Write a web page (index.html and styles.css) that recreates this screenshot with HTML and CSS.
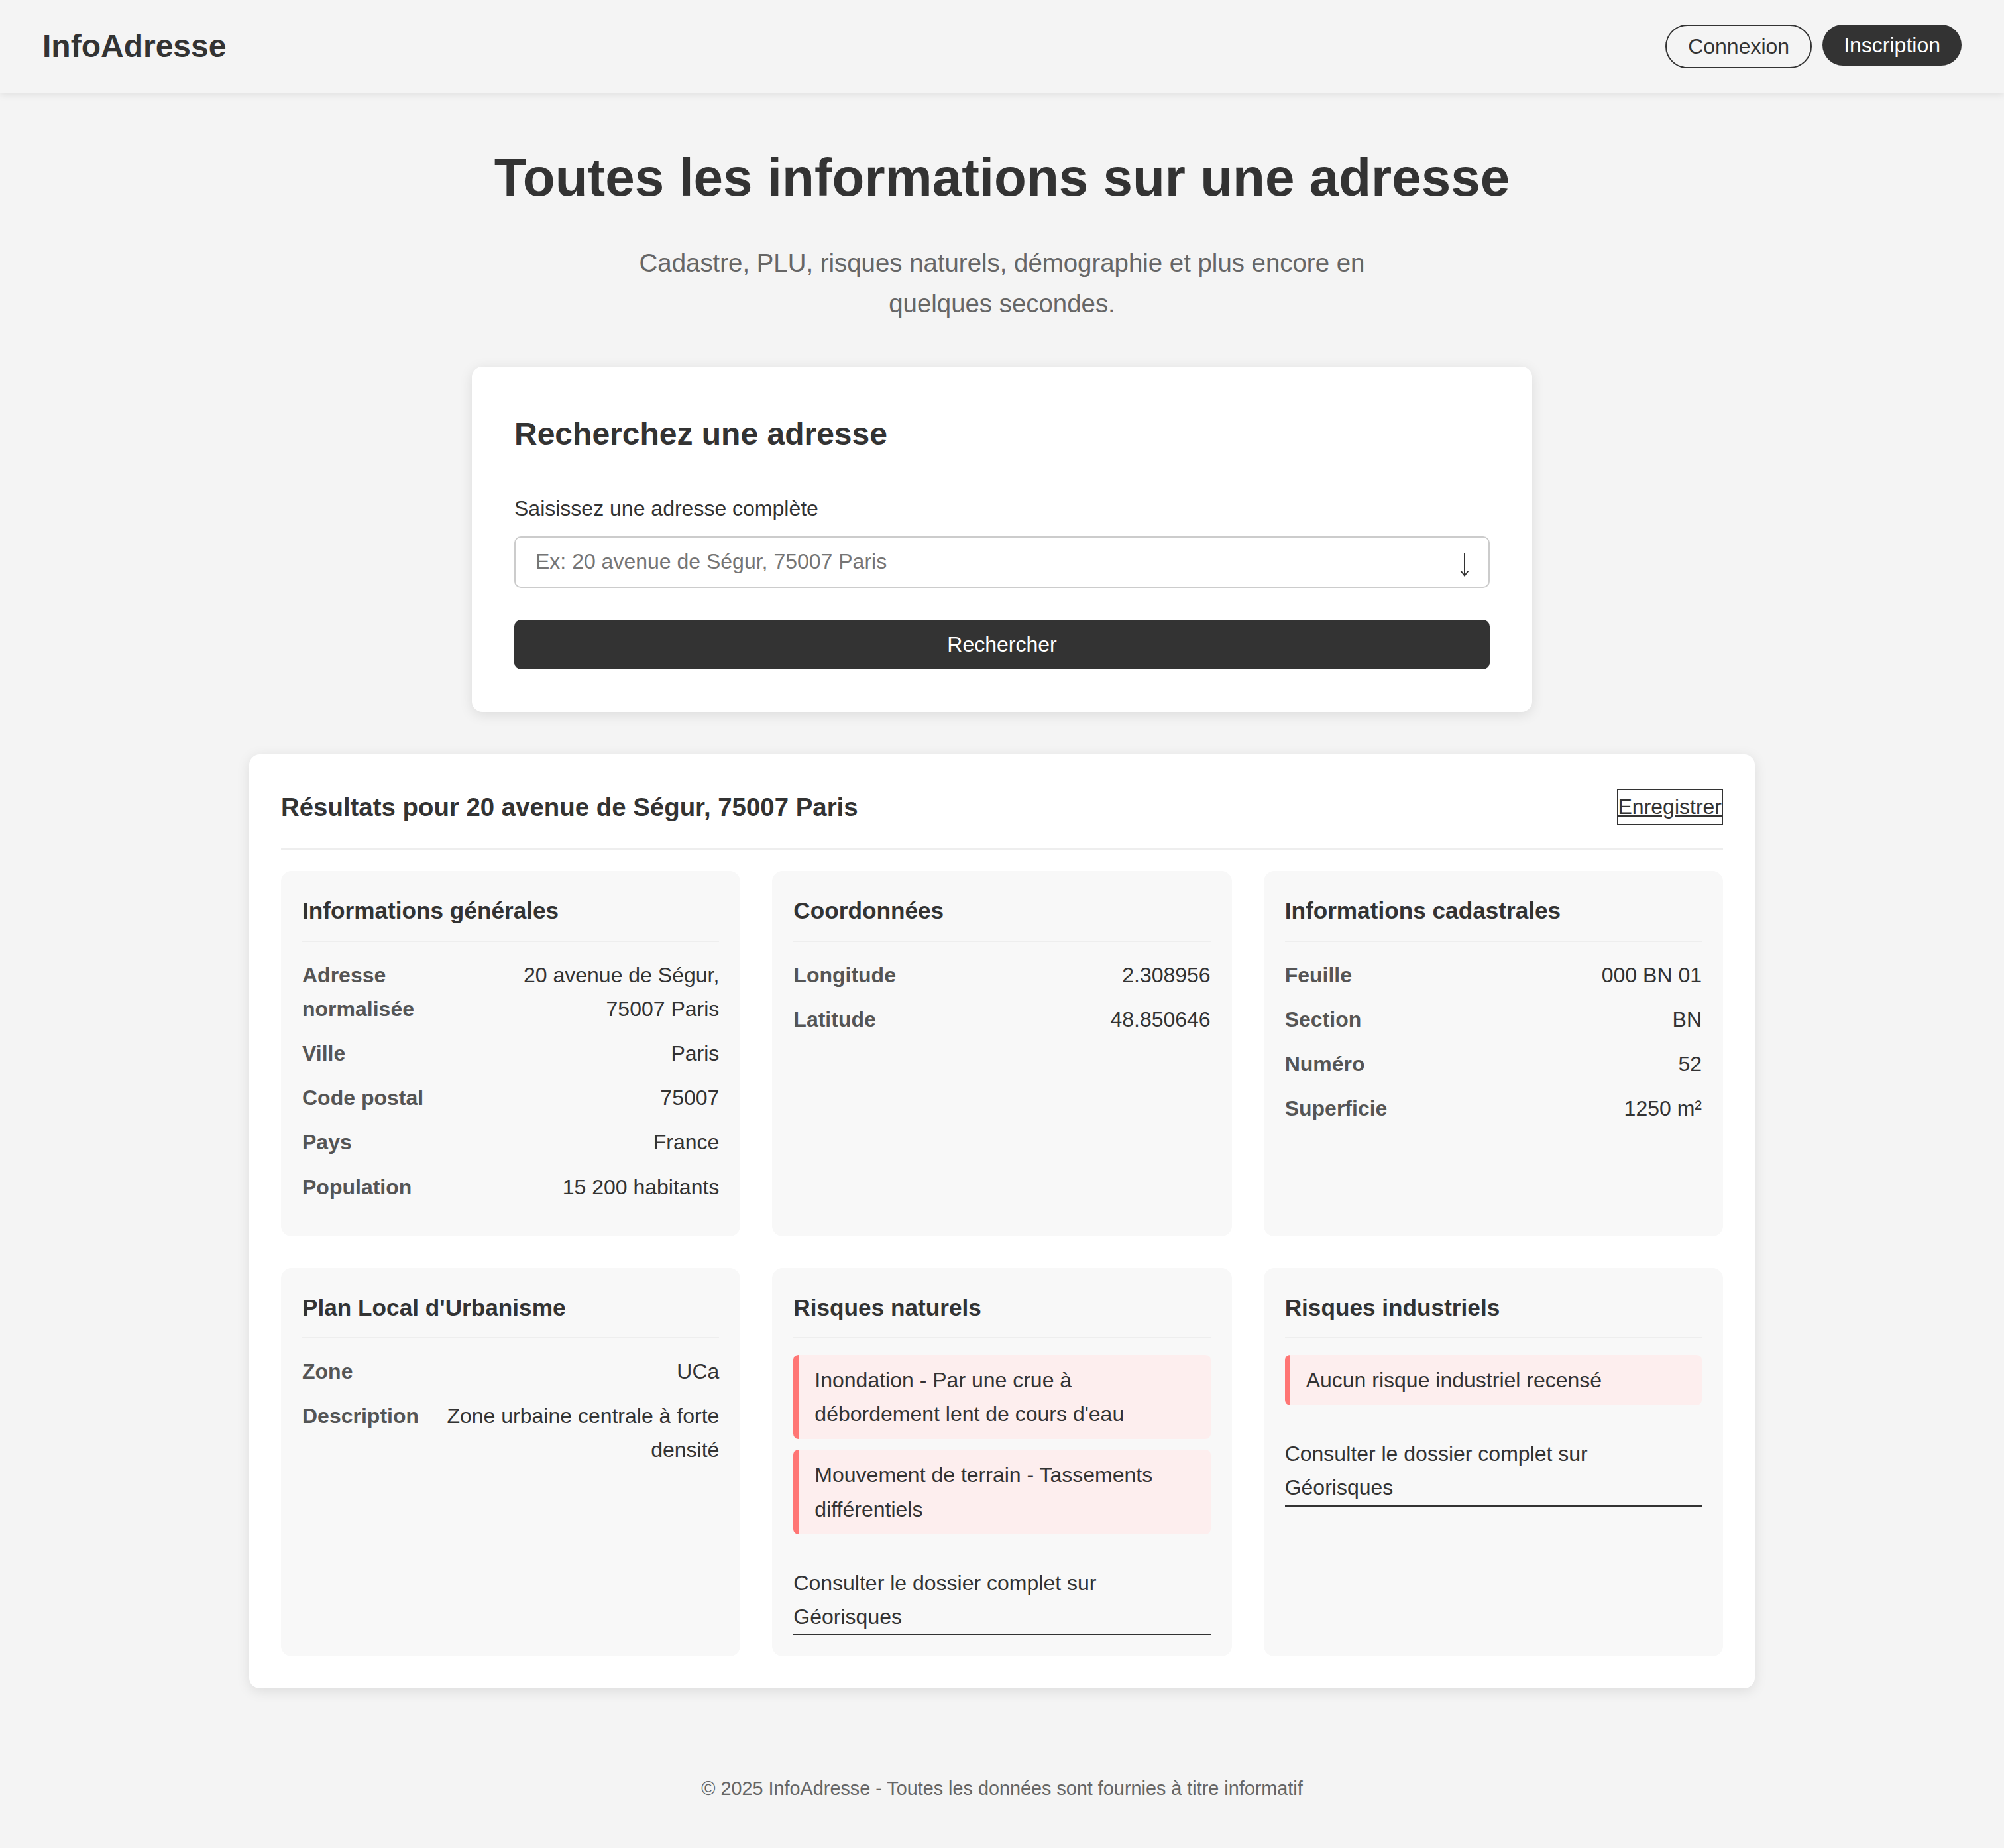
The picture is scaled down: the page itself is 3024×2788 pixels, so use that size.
FILE: index.html
```html
<!DOCTYPE html>
<html lang="fr">
<head>
<meta charset="utf-8">
<title>InfoAdresse</title>
<link rel="stylesheet" href="styles.css">
</head>
<body>
<header class="site-header">
  <div class="logo">InfoAdresse</div>
  <nav class="nav">
    <button class="btn-outline">Connexion</button>
    <button class="btn-dark">Inscription</button>
  </nav>
</header>

<main class="main">
  <section class="hero">
    <h1 class="hero-title">Toutes les informations sur une adresse</h1>
    <p class="hero-sub">Cadastre, PLU, risques naturels, démographie et plus encore en quelques secondes.</p>
  </section>

  <section class="search-card">
    <h2 class="search-title">Recherchez une adresse</h2>
    <label class="search-label" for="addr">Saisissez une adresse complète</label>
    <div class="search-input">
      <input id="addr" class="search-field" type="text" placeholder="Ex: 20 avenue de Ségur, 75007 Paris">
      <svg class="search-arrow" width="14" height="36" viewBox="0 0 14 36"><path d="M7 1 V34 M1.5 27.5 L7 34.5 L12.5 27.5" fill="none" stroke="#333" stroke-width="2"/></svg>
    </div>
    <button class="search-btn">Rechercher</button>
  </section>

  <section class="results">
    <div class="results-head">
      <h2 class="results-title">Résultats pour 20 avenue de Ségur, 75007 Paris</h2>
      <button class="save-btn">Enregistrer</button>
    </div>

    <div class="grid">
      <div class="info-card">
        <h3 class="info-title">Informations générales</h3>
        <div class="row"><span class="lbl">Adresse normalisée</span><span class="val">20 avenue de Ségur, 75007 Paris</span></div>
        <div class="row"><span class="lbl">Ville</span><span class="val">Paris</span></div>
        <div class="row"><span class="lbl">Code postal</span><span class="val">75007</span></div>
        <div class="row"><span class="lbl">Pays</span><span class="val">France</span></div>
        <div class="row"><span class="lbl">Population</span><span class="val">15 200 habitants</span></div>
      </div>

      <div class="info-card">
        <h3 class="info-title">Coordonnées</h3>
        <div class="row"><span class="lbl">Longitude</span><span class="val">2.308956</span></div>
        <div class="row"><span class="lbl">Latitude</span><span class="val">48.850646</span></div>
      </div>

      <div class="info-card">
        <h3 class="info-title">Informations cadastrales</h3>
        <div class="row"><span class="lbl">Feuille</span><span class="val">000 BN 01</span></div>
        <div class="row"><span class="lbl">Section</span><span class="val">BN</span></div>
        <div class="row"><span class="lbl">Numéro</span><span class="val">52</span></div>
        <div class="row"><span class="lbl">Superficie</span><span class="val">1250 m²</span></div>
      </div>

      <div class="info-card">
        <h3 class="info-title">Plan Local d'Urbanisme</h3>
        <div class="row"><span class="lbl">Zone</span><span class="val">UCa</span></div>
        <div class="row"><span class="lbl">Description</span><span class="val">Zone urbaine centrale à forte densité</span></div>
      </div>

      <div class="info-card">
        <h3 class="info-title">Risques naturels</h3>
        <div class="alert">Inondation - Par une crue à débordement lent de cours d'eau</div>
        <div class="alert">Mouvement de terrain - Tassements différentiels</div>
        <a class="geo-link" href="#">Consulter le dossier complet sur Géorisques</a>
      </div>

      <div class="info-card">
        <h3 class="info-title">Risques industriels</h3>
        <div class="alert">Aucun risque industriel recensé</div>
        <a class="geo-link" href="#">Consulter le dossier complet sur Géorisques</a>
      </div>
    </div>
  </section>
</main>

<footer class="site-footer">© 2025 InfoAdresse - Toutes les données sont fournies à titre informatif</footer>
</body>
</html>
```

FILE: styles.css
```css
* { box-sizing: border-box; }

html, body {
  margin: 0;
  padding: 0;
}

body {
  background: #f4f4f4;
  color: #333;
  font-family: "Liberation Sans", Arial, Helvetica, sans-serif;
  font-size: 32px;
  line-height: 1.6;
}

/* Header */
.site-header {
  height: 140px;
  padding: 0 64px;
  display: flex;
  align-items: center;
  justify-content: space-between;
  background: #f4f4f4;
  box-shadow: 0 4px 10px rgba(0, 0, 0, 0.08);
  position: relative;
  z-index: 1;
}

.logo {
  font-size: 48px;
  font-weight: bold;
  color: #333;
  line-height: 1.2;
}

.nav {
  display: flex;
  align-items: flex-start;
  gap: 16px;
}

.btn-outline,
.btn-dark {
  font-family: inherit;
  font-size: 32px;
  line-height: 38px;
  padding: 12px 32px;
  border-radius: 999px;
  cursor: pointer;
}

.btn-outline {
  background: transparent;
  color: #333;
  border: 2px solid #333;
}

.btn-dark {
  background: #333;
  color: #fff;
  border: none;
}

/* Main */
.main {
  max-width: 2400px;
  margin: 0 auto;
  padding: 64px 64px;
}

.hero {
  text-align: center;
}

.hero-title {
  margin: 0 0 34px;
  font-size: 80px;
  line-height: 1.6;
  font-weight: bold;
  color: #333;
}

.hero-sub {
  max-width: 1200px;
  margin: 0 auto 64px;
  font-size: 38.4px;
  line-height: 1.6;
  color: #666;
}

/* Search card */
.search-card {
  max-width: 1600px;
  margin: 0 auto 64px;
  background: #fff;
  border-radius: 16px;
  padding: 64px;
  box-shadow: 0 4px 20px rgba(0, 0, 0, 0.1);
}

.search-title {
  margin: 0 0 48px;
  font-size: 48px;
  line-height: 1.6;
  font-weight: bold;
}

.search-label {
  display: block;
  margin-bottom: 16px;
  font-size: 32px;
  color: #333;
}

.search-input {
  display: flex;
  align-items: center;
  height: 78px;
  border: 2px solid #ccc;
  border-radius: 10px;
  background: #fff;
  padding: 0 29px 0 30px;
  margin-bottom: 48px;
}

.search-field {
  flex: 1;
  min-width: 0;
  border: none;
  outline: none;
  background: transparent;
  padding: 0;
  font-family: inherit;
  font-size: 32px;
  color: #333;
}

.search-field::placeholder {
  color: #757575;
}

.search-arrow {
  flex: none;
  margin-top: 8px;
}

.search-btn {
  display: block;
  width: 100%;
  height: 75px;
  border: none;
  border-radius: 10px;
  background: #333;
  color: #fff;
  font-family: inherit;
  font-size: 32px;
  cursor: pointer;
}

/* Results */
.results {
  background: #fff;
  border-radius: 16px;
  padding: 49px 48px 48px;
  box-shadow: 0 4px 20px rgba(0, 0, 0, 0.1);
}

.results-head {
  display: flex;
  align-items: center;
  justify-content: space-between;
  padding-bottom: 32px;
  border-bottom: 2px solid #eee;
  margin-bottom: 32px;
}

.results-title {
  margin: 0;
  font-size: 38.4px;
  line-height: 1.6;
  font-weight: bold;
}

.save-btn {
  background: transparent;
  border: 2px solid #333;
  padding: 0;
  font-family: inherit;
  font-size: 32px;
  line-height: 1.6;
  color: #333;
  text-decoration: underline;
  cursor: pointer;
}

.grid {
  display: grid;
  grid-template-columns: repeat(3, 1fr);
  gap: 48px;
}

.info-card {
  background: #f8f8f8;
  border-radius: 16px;
  padding: 32px;
}

.info-title {
  margin: 0 0 25px;
  padding-bottom: 16px;
  border-bottom: 2px solid #eee;
  font-size: 35.2px;
  line-height: 1.6;
  font-weight: bold;
  color: #333;
}

.row {
  display: flex;
  justify-content: space-between;
  gap: 16px;
  margin-bottom: 16px;
}

.lbl {
  font-weight: bold;
  color: #555;
}

.val {
  text-align: right;
  color: #333;
}

.alert {
  background: #fdeeee;
  border-left: 8px solid #ff7675;
  border-radius: 8px;
  padding: 13px 24px 12px;
  margin-bottom: 16px;
  color: #333;
}

.geo-link {
  display: block;
  margin-top: 48px;
  padding-right: 8px;
  color: #333;
  text-decoration: none;
  border-bottom: 2px solid #333;
}

/* Footer */
.site-footer {
  padding: 64px;
  text-align: center;
  font-size: 28.8px;
  line-height: 1.6;
  color: #666;
}
```
